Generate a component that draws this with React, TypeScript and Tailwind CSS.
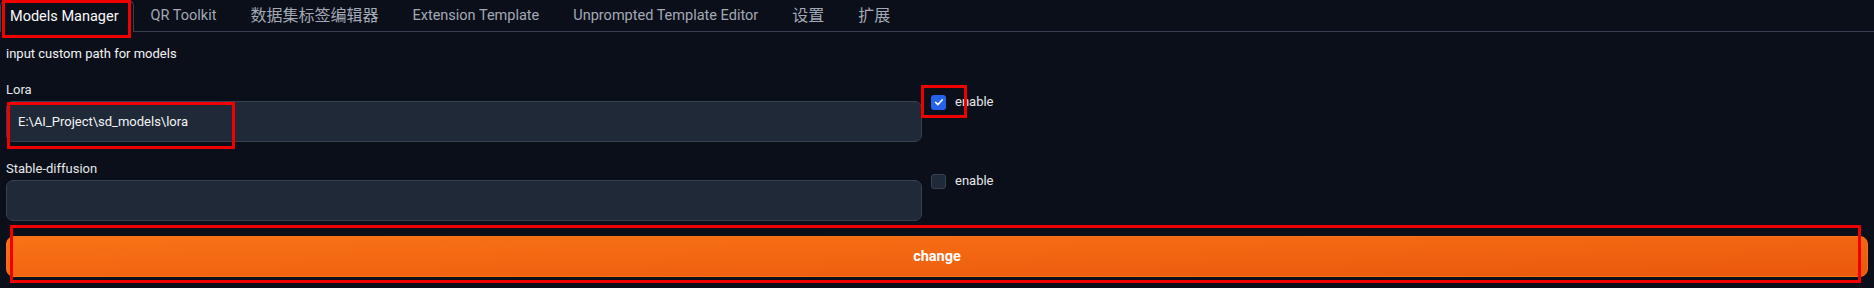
import React from "react"

const tabs = [
	{ label: "QR Toolkit" },
	{ label: "数据集标签编辑器", cjk: true },
	{ label: "Extension Template" },
	{ label: "Unprompted Template Editor" },
	{ label: "设置", cjk: true },
	{ label: "扩展", cjk: true },
]

const PathRow: React.FC<{ label: string; value: string; checked: boolean }> = ({
	label,
	value,
	checked,
}) => {
	return (
		<div className="flex flex-row items-start">
			<div className="flex w-[916px] flex-none flex-col">
				<div className="h-[16px] text-[13px] leading-[16px] text-[#e5e7eb]">{label}</div>
				<div className="mt-[3px] flex h-[41px] items-center rounded-[7px] border border-[#374151] bg-[#1f2937] px-[11px] text-[13px] text-[#f3f4f6]">
					{value}
				</div>
			</div>
			<div className="ml-[9px] flex flex-row items-center pt-[12px]">
				{checked ? (
					<div className="flex h-[15px] w-[15px] items-center justify-center rounded-[3px] bg-[#2563eb]">
						<svg viewBox="0 0 16 16" className="h-[12px] w-[12px]">
							<path
								d="M3.5 8.5l3 3 6-6.5"
								fill="none"
								stroke="white"
								strokeWidth="2"
								strokeLinecap="round"
								strokeLinejoin="round"
							/>
						</svg>
					</div>
				) : (
					<div className="h-[15px] w-[15px] rounded-[3px] border border-[#374151] bg-[#1f2937]" />
				)}
				<span className="ml-[9px] text-[13px] leading-[16px] text-[#e5e7eb]">enable</span>
			</div>
		</div>
	)
}

export default function App() {
	return (
		<div className="relative h-[288px] w-full overflow-hidden bg-[#0b0f19] font-['Roboto','Noto_Sans_CJK_SC',sans-serif]">
			{/* tab bar */}
			<div className="flex h-[32px] flex-row items-end border-b border-[#374151]">
				<div className="-mb-px flex h-[32px] items-center rounded-t-[6px] border border-b-0 border-[#374151] bg-[#0b0f19] pl-[9px] pr-[14px] text-[14.5px] text-[#f9fafb]">
					Models Manager
				</div>
				{tabs.map((tab) => (
					<div
						key={tab.label}
						className={
							tab.cjk
								? "flex h-[31px] items-center px-[17px] text-[16px] text-[#a3aab6]"
								: "flex h-[31px] items-center px-[17px] text-[14.5px] text-[#a3aab6]"
						}
					>
						{tab.label}
					</div>
				))}
			</div>

			<div className="flex flex-col px-[6px]">
				<div className="mt-[12px] text-[13px] leading-[20px] text-[#f3f4f6]">
					input custom path for models
				</div>
				<div className="mt-[18px]">
					<PathRow label="Lora" value="E:\AI_Project\sd_models\lora" checked />
				</div>
				<div className="mt-[19px]">
					<PathRow label="Stable-diffusion" value="" checked={false} />
				</div>
				<button className="mt-[15px] flex h-[41px] w-full items-center justify-center rounded-[8px] border border-[#f97316] bg-linear-to-br from-[#f97316] to-[#ea580c] text-[14.5px] font-bold text-white">
					change
				</button>
			</div>

			{/* red highlight annotations */}
			<div className="pointer-events-none absolute left-[2px] top-0 h-[38px] w-[129px] border-[3px] border-[#f00000]" />
			<div className="pointer-events-none absolute left-[7px] top-[102px] h-[47px] w-[228px] border-[3px] border-[#f00000]" />
			<div className="pointer-events-none absolute left-[921px] top-[85px] h-[33px] w-[46px] border-[3px] border-[#f00000]" />
			<div className="pointer-events-none absolute left-[10px] top-[225px] h-[58px] w-[1851px] border-[3px] border-[#f00000]" />
		</div>
	)
}
